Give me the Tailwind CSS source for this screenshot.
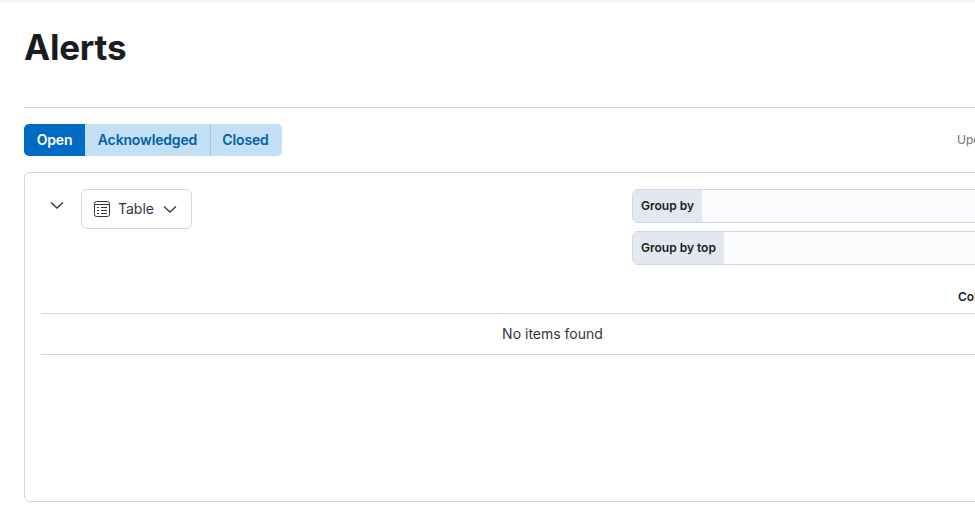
<!DOCTYPE html>
<html>
<head>
  <meta charset="UTF-8">
  <title>Alerts</title>
  <script src="https://cdn.jsdelivr.net/npm/@tailwindcss/browser@4"></script>
</head>
<body class="bg-white text-[#1a1c21] font-['Inter',sans-serif] overflow-hidden h-[518px]">
  <div class="h-[3px] bg-[#f6f9fc]"></div>
  <div class="w-[1105px] px-6">
    <!-- Page title -->
    <div class="h-[105px] border-b border-[#cdd8e4] pt-[23px]">
      <h1 class="text-[35px] leading-[42px] font-bold tracking-[-0.2px]">Alerts</h1>
    </div>

    <!-- Status tabs -->
    <div class="flex items-center justify-between mt-4 h-8">
      <div class="flex h-8 text-sm font-semibold tracking-[-0.15px] rounded-[5px] overflow-hidden">
        <button class="w-[61px] bg-[#006bc4] text-white">Open</button>
        <button class="w-[126px] bg-[#c2dff3] text-[#0061a6] border-r border-[#96c6e8]">Acknowledged</button>
        <button class="w-[71px] pr-[2px] bg-[#c2dff3] text-[#0061a6]">Closed</button>
      </div>
      <span class="text-xs text-[#69707d] whitespace-nowrap w-[124px]">Updated 2 minutes ago</span>
    </div>

    <!-- Alerts panel -->
    <div class="mt-4 h-[330px] border border-[#cdd8e4] rounded-md px-4 pt-4">
      <div class="flex justify-between h-[76px]">
        <div class="flex items-start">
          <button class="w-4 h-4 ml-2 mt-2 flex items-center justify-center">
            <svg width="16" height="16" viewBox="0 0 16 16" fill="none" stroke="#343741" stroke-width="1.3"><path d="M2 5.5l6 5.5 6-5.5"/></svg>
          </button>
          <button class="ml-4 w-[111px] h-10 flex items-center border border-[#cdd8e4] rounded-md pl-3 text-sm text-[#343741]">
            <svg width="16" height="16" viewBox="0 0 16 16" fill="none" stroke="#343741" stroke-width="1" class="mr-2"><rect x="0.5" y="0.5" width="15" height="15" rx="2"/><path d="M1 3.5h14M3 6.5h2M7 6.5h6M3 9.5h2M7 9.5h6M3 12.5h2M7 12.5h6"/></svg>
            <span>Table</span>
            <svg width="16" height="16" viewBox="0 0 16 16" fill="none" stroke="#343741" stroke-width="1.3" class="ml-2"><path d="M2 5.5l6 5.5 6-5.5"/></svg>
          </button>
        </div>
        <div class="w-[432px] flex flex-col gap-2">
          <div class="flex h-[34px] border border-[#cdd8e4] rounded-md overflow-hidden bg-[#f9fbfc] text-xs font-semibold">
            <span class="flex items-center px-2 bg-[#e3e8f0]">Group by</span>
          </div>
          <div class="flex h-[34px] border border-[#cdd8e4] rounded-md overflow-hidden bg-[#f9fbfc] text-xs font-semibold">
            <span class="flex items-center px-2 bg-[#e3e8f0]">Group by top</span>
          </div>
        </div>
      </div>

      <!-- Table -->
      <div class="flex justify-end items-end h-[49px] pb-2 border-b border-[#cdd8e4]">
        <span class="text-xs font-semibold w-[106px]">Columns</span>
      </div>
      <div class="flex items-center justify-center h-[41px] border-b border-[#cdd8e4] text-sm text-[#343741]">No items found</div>
    </div>
  </div>
</body>
</html>
